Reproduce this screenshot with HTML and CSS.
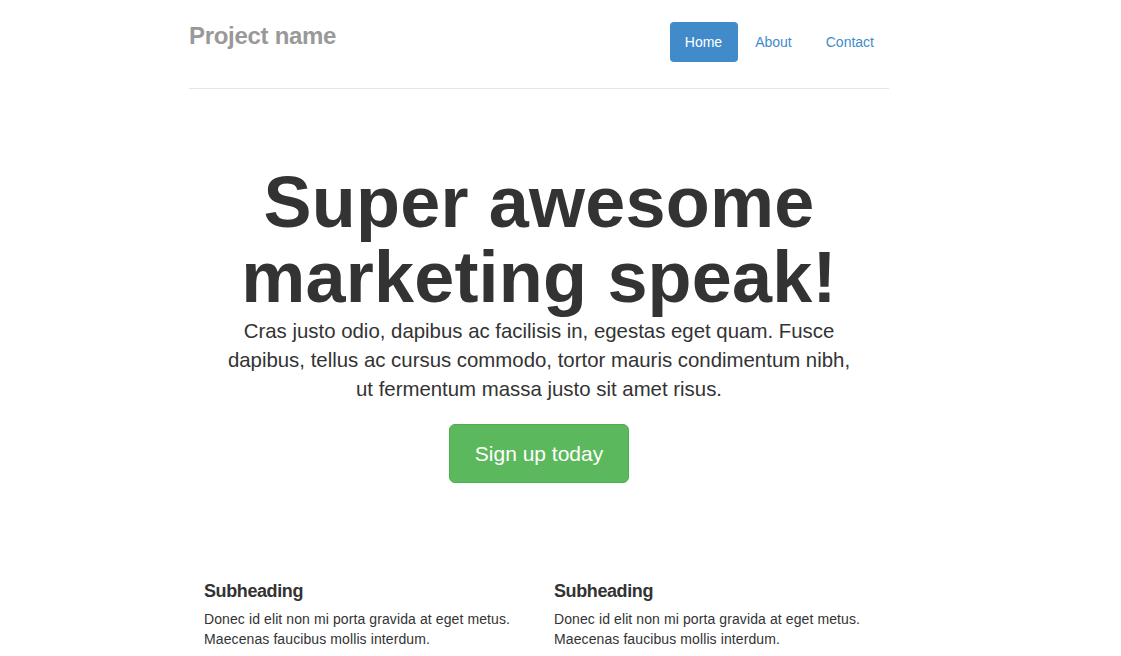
FILE: index.html
```html
<!DOCTYPE html>
<html lang="en">
<head>
<meta charset="utf-8">
<title>Narrow Jumbotron</title>
<link rel="stylesheet" href="styles.css">
</head>
<body>
<div class="container">
  <div class="header">
    <h3 class="brand">Project name</h3>
    <ul class="nav">
      <li><a class="pill active" href="#">Home</a></li>
      <li><a class="pill" href="#">About</a></li>
      <li><a class="pill" href="#">Contact</a></li>
    </ul>
  </div>

  <div class="jumbotron">
    <h1 class="hero-title">Super awesome marketing speak!</h1>
    <p class="lead">Cras justo odio, dapibus ac facilisis in, egestas eget quam. Fusce dapibus, tellus ac cursus commodo, tortor mauris condimentum nibh, ut fermentum massa justo sit amet risus.</p>
    <p class="cta"><a class="btn-success" href="#">Sign up today</a></p>
  </div>

  <div class="marketing">
    <div class="col">
      <h4 class="sub">Subheading</h4>
      <p class="txt">Donec id elit non mi porta gravida at eget metus. Maecenas faucibus mollis interdum.</p>
    </div>
    <div class="col">
      <h4 class="sub">Subheading</h4>
      <p class="txt">Donec id elit non mi porta gravida at eget metus. Maecenas faucibus mollis interdum.</p>
    </div>
  </div>
</div>
</body>
</html>
```

FILE: styles.css
```css
html, body {
  margin: 0;
  padding: 0;
  background: #fff;
}
body {
  font-family: "Liberation Sans", Arial, sans-serif;
  font-size: 14px;
  line-height: 20px;
  color: #333;
  padding-top: 22px;
}
.container {
  width: 700px;
  margin-left: 174px;
  padding: 0 15px;
}
.header {
  display: flex;
  justify-content: space-between;
  align-items: flex-start;
  padding-bottom: 26px;
  border-bottom: 1px solid #e5e5e5;
}
.brand {
  margin: 0;
  font-size: 24px;
  line-height: 28px;
  font-weight: bold;
  color: #999;
  letter-spacing: -0.3px;
}
.nav {
  display: flex;
  gap: 2px;
  list-style: none;
  margin: 0;
  padding: 0;
}
.pill {
  display: block;
  padding: 10px 15px;
  line-height: 20px;
  font-size: 14px;
  color: #428bca;
  text-decoration: none;
  border-radius: 4px;
}
.nav li:last-child .pill {
  padding-left: 17px;
}
.pill.active {
  background: #428bca;
  color: #fff;
  padding: 10px 16px 10px 15px;
}
.jumbotron {
  text-align: center;
  padding: 76px 30px 0;
}
.hero-title {
  margin: 0;
  font-size: 72px;
  line-height: 75px;
  font-weight: bold;
  color: #333;
  letter-spacing: 0.2px;
}
.lead {
  margin: 2px 0 0;
  font-size: 20.4px;
  line-height: 29px;
  color: #333;
}
.cta {
  margin: 20px 0 0;
}
.btn-success {
  display: inline-block;
  padding: 14px 25px;
  font-size: 21px;
  line-height: 29px;
  color: #fff;
  text-decoration: none;
  background: #5cb85c;
  border: 1px solid #4cae4c;
  border-radius: 6px;
}
.marketing {
  display: flex;
  margin-top: 98px;
}
.col {
  flex: 0 0 350px;
  box-sizing: border-box;
  padding: 0 15px;
}
.sub {
  margin: 0;
  font-size: 18px;
  line-height: 20px;
  font-weight: bold;
  color: #333;
  letter-spacing: -0.4px;
}
.txt {
  margin: 8px 0 0;
  font-size: 14px;
  line-height: 20px;
  letter-spacing: 0.1px;
}
```
